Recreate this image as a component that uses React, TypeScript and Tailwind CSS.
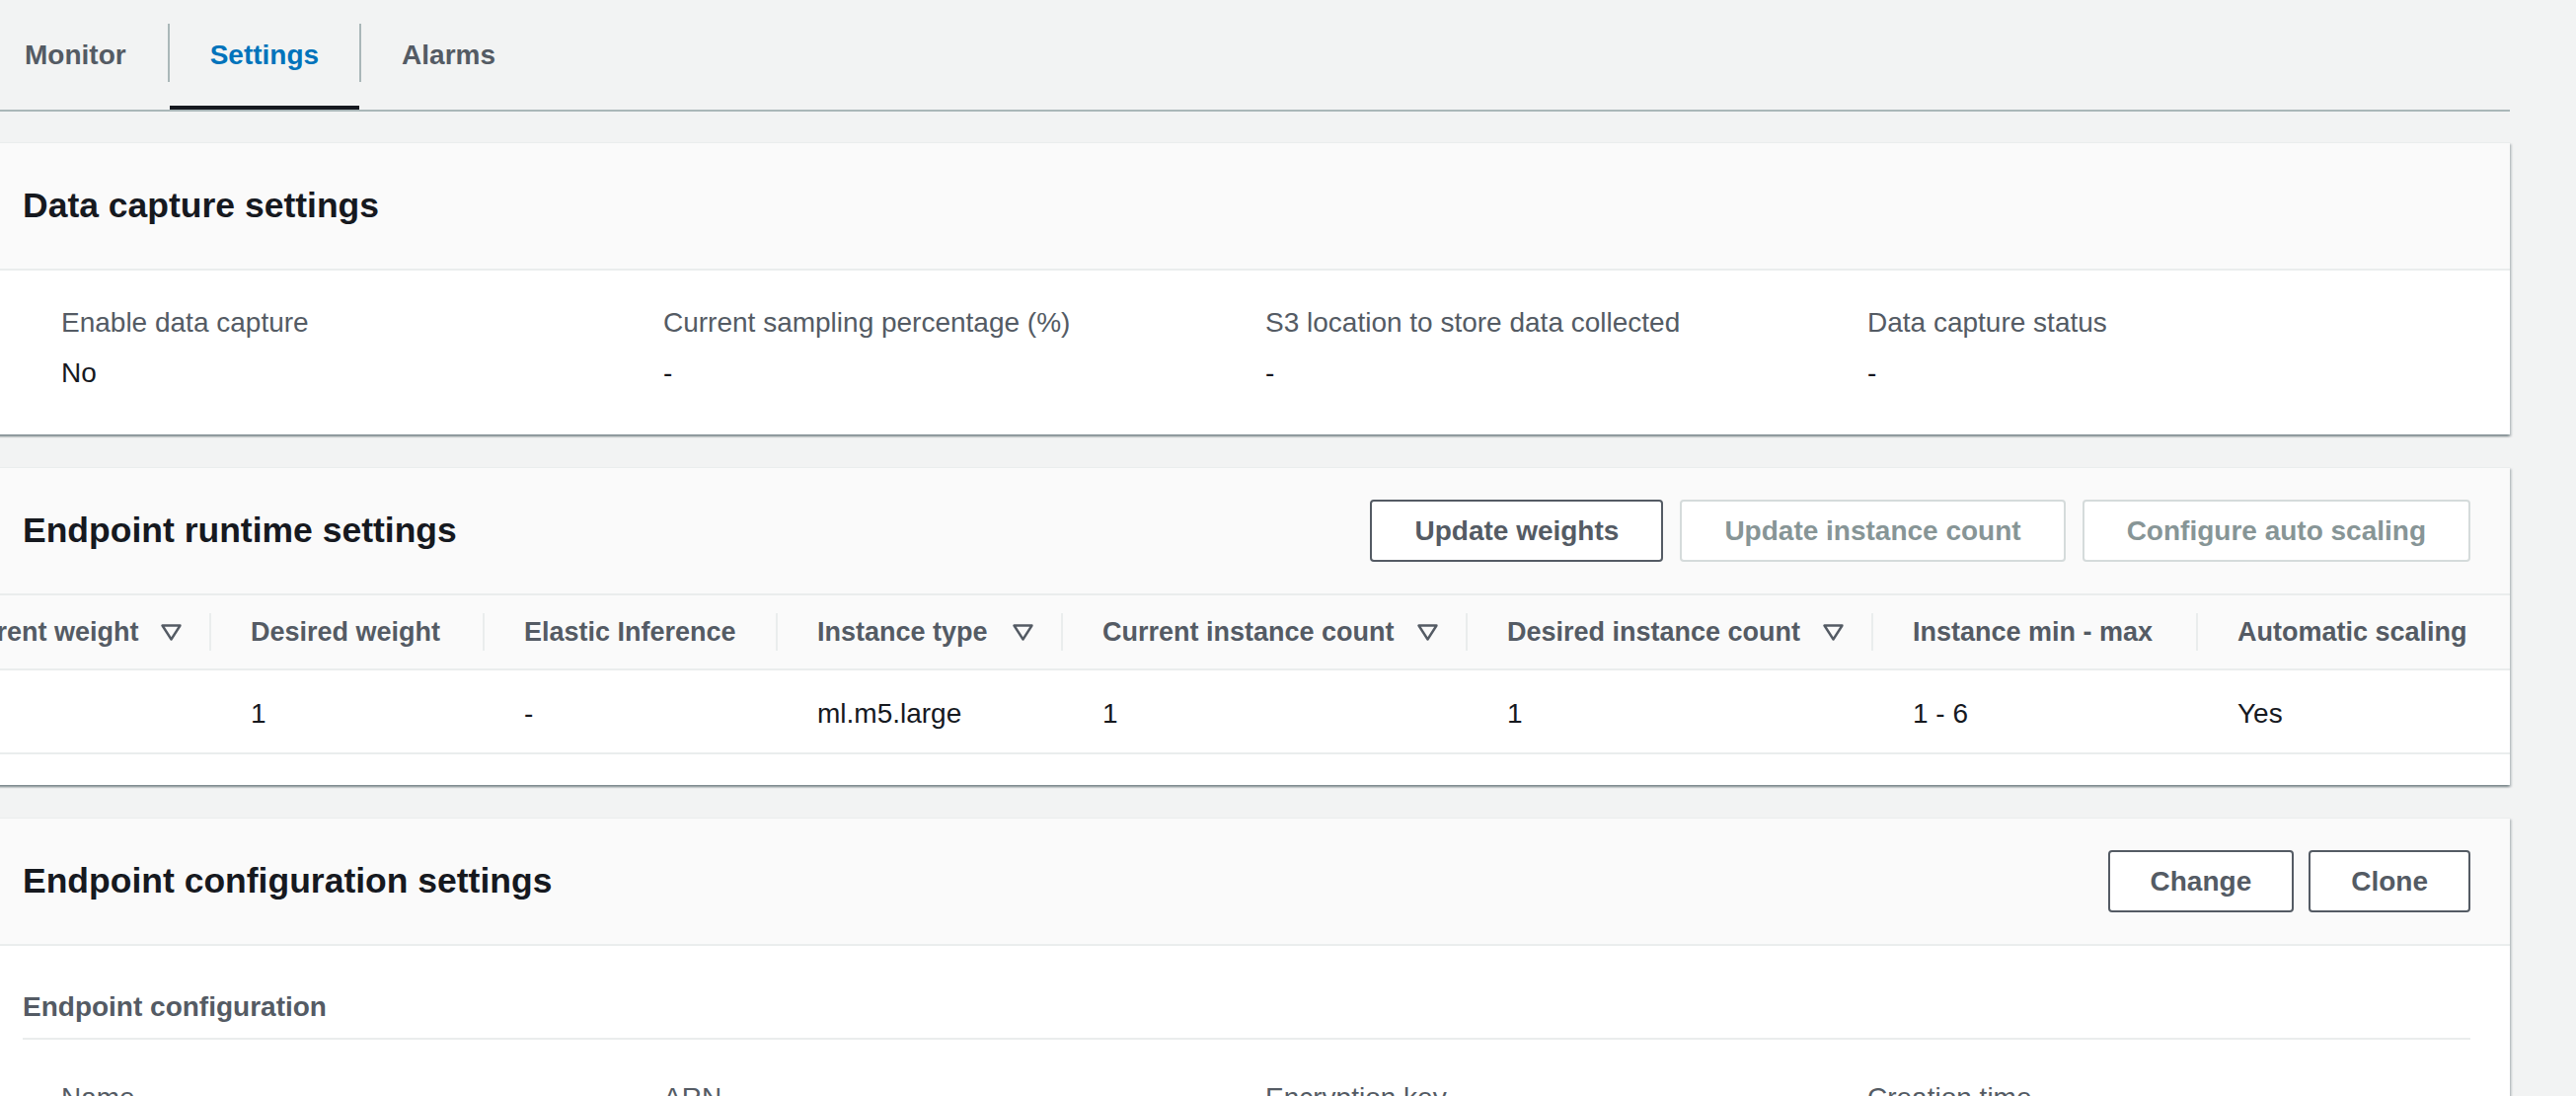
import type { ReactNode } from "react";

const panelShadow =
	"shadow-[0_2px_2px_0_rgba(0,28,36,0.3),2px_2px_2px_0_rgba(0,28,36,0.15),-2px_2px_2px_0_rgba(0,28,36,0.15)]";

function SortIcon() {
	return (
		<svg width="21" height="17" viewBox="0 0 21 17" className="shrink-0">
			<path d="M1.5 1.5 H19.5 L10.5 15.5 Z" fill="none" stroke="#545b64" strokeWidth="2.4" strokeLinejoin="round" />
		</svg>
	);
}

function Button({ children, disabled, wide }: { children: ReactNode; disabled?: boolean; wide?: boolean }) {
	const base = `h-[63px] ${wide ? "px-[43px]" : "px-[41px]"} rounded-[4px] border-2 bg-white text-[28px] font-bold`;
	return (
		<button className={disabled ? `${base} border-[#d5dbdb] text-[#879596]` : `${base} border-[#545b64] text-[#545b64]`}>
			{children}
		</button>
	);
}

function PanelHeader({ title, children }: { title: string; children?: ReactNode }) {
	return (
		<div className="flex h-[129px] items-center justify-between border-b-2 border-[#eaeded] bg-[#fafafa] px-[40px]">
			<h2 className="text-[35.5px] font-bold text-[#16191f]">{title}</h2>
			{children}
		</div>
	);
}

function Field({ label, value }: { label: string; value?: string }) {
	return (
		<div className="flex flex-col gap-[7px]">
			<div className="text-[28px] leading-[44px] text-[#545b64]">{label}</div>
			{value !== undefined && <div className="text-[28px] leading-[44px] text-[#16191f]">{value}</div>}
		</div>
	);
}

const columns = [
	{ title: "Current weight", width: "w-[311px]", sortable: true, value: "1", first: true },
	{ title: "Desired weight", width: "w-[277px]", value: "1" },
	{ title: "Elastic Inference", width: "w-[297px]", value: "-" },
	{ title: "Instance type", width: "w-[289px]", sortable: true, value: "ml.m5.large" },
	{ title: "Current instance count", width: "w-[410px]", sortable: true, value: "1" },
	{ title: "Desired instance count", width: "w-[411px]", sortable: true, value: "1" },
	{ title: "Instance min - max", width: "w-[329px]", value: "1 - 6" },
	{ title: "Automatic scaling", width: "w-[318px]", value: "Yes" },
];

function RuntimeTable() {
	return (
		<div className="overflow-hidden pb-[31px]">
			<div className="ml-[-82px] w-[2642px]">
				<div className="flex h-[76px] items-center border-b-2 border-[#eaeded] bg-[#fafafa]">
					{columns.map((col) => (
						<div key={col.title} className={`${col.width} flex h-[38px] shrink-0 items-center`}>
							{!col.first && <div className="h-full w-[2px] bg-[#eaeded]" />}
							<div
								className={`flex flex-1 items-center justify-between whitespace-nowrap pr-[28px] text-[27px] font-bold text-[#545b64] ${
									col.first ? "pl-[49px]" : "pl-[40px]"
								}`}
							>
								<span>{col.title}</span>
								{col.sortable && <SortIcon />}
							</div>
						</div>
					))}
				</div>
				<div className="flex h-[85px] items-center border-b-2 border-[#eaeded] pt-[5px]">
					{columns.map((col) => (
						<div key={col.title} className={`${col.width} shrink-0 pl-[42px] text-[28px] text-[#16191f]`}>
							{col.value}
						</div>
					))}
				</div>
			</div>
		</div>
	);
}

export default function App() {
	return (
		<div className="h-[1110px] w-full overflow-hidden bg-[#f2f3f3]" style={{ fontFamily: '"Liberation Sans", Arial, sans-serif' }}>
			<div className="ml-[-17px] w-[2560px]">
				{/* tabs */}
				<div className="flex h-[113px] border-b-2 border-[#aab7b8]">
					<div className="flex items-center px-[42px] text-[28px] font-bold text-[#545b64]">Monitor</div>
					<div className="mt-[24px] h-[59px] w-[2px] bg-[#aab7b8]" />
					<div className="relative flex items-center px-[41px] text-[28px] font-bold text-[#0073bb]">
						Settings
						<div className="absolute bottom-0 left-0 right-0 h-[4px] bg-[#16191f]" />
					</div>
					<div className="mt-[24px] h-[59px] w-[2px] bg-[#aab7b8]" />
					<div className="flex items-center px-[41px] text-[28px] font-bold text-[#545b64]">Alarms</div>
				</div>

				<div className="mt-[31px] flex flex-col gap-[33px]">
					{/* data capture */}
					<section className={`border-t border-[#eaeded] bg-white ${panelShadow}`}>
						<PanelHeader title="Data capture settings" />
						<div className="grid grid-cols-[repeat(4,610px)] pb-[40px] pl-[79px] pt-[31px]">
							<Field label="Enable data capture" value="No" />
							<Field label="Current sampling percentage (%)" value="-" />
							<Field label="S3 location to store data collected" value="-" />
							<Field label="Data capture status" value="-" />
						</div>
					</section>

					{/* runtime */}
					<section className={`border-t border-[#eaeded] bg-white ${panelShadow}`}>
						<PanelHeader title="Endpoint runtime settings">
							<div className="flex items-center gap-[17px]">
								<Button wide>Update weights</Button>
								<Button wide disabled>Update instance count</Button>
								<Button wide disabled>Configure auto scaling</Button>
							</div>
						</PanelHeader>
						<RuntimeTable />
					</section>

					{/* endpoint config */}
					<section className={`border-t border-[#eaeded] bg-white ${panelShadow}`}>
						<PanelHeader title="Endpoint configuration settings">
							<div className="flex items-center gap-[15px]">
								<Button>Change</Button>
								<Button>Clone</Button>
							</div>
						</PanelHeader>
						<div className="px-[40px] pt-[40px]">
							<h3 className="border-b-2 border-[#eaeded] pb-[9px] text-[28px] font-bold leading-[44px] text-[#545b64]">
								Endpoint configuration
							</h3>
							<div className="grid grid-cols-[repeat(4,610px)] pb-[40px] pl-[39px] pt-[37px]">
								<Field label="Name" value="sagemaker-endpoint-config" />
								<Field label="ARN" value="arn:aws:sagemaker:us-east-1" />
								<Field label="Encryption key" value="-" />
								<Field label="Creation time" value="Jan 01, 2021 00:00 UTC" />
							</div>
						</div>
					</section>
				</div>
			</div>
		</div>
	);
}
